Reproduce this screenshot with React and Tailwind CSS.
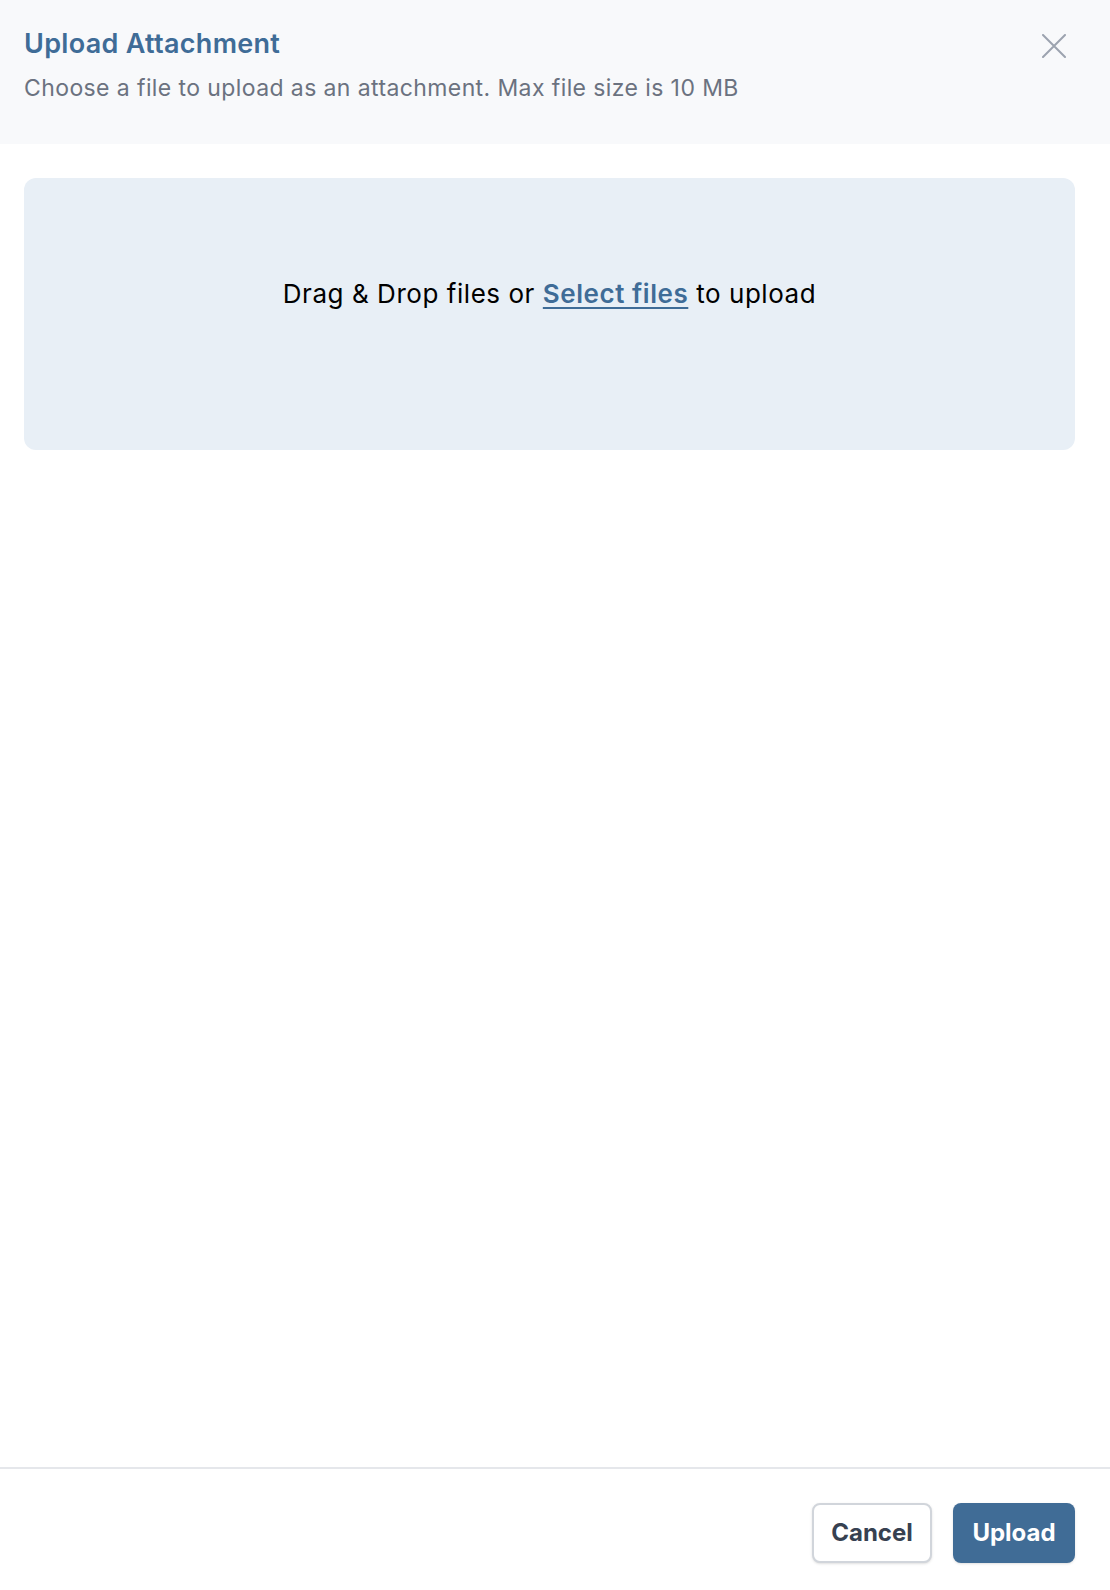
import React from 'react';

function CloseIcon() {
  return (
    <svg width="24" height="24" viewBox="0 0 24 24" fill="none" stroke="currentColor" strokeWidth="2" strokeLinecap="round">
      <path d="M1 1L23 23M23 1L1 23" />
    </svg>
  );
}

export default function App() {
  return (
    <div className="h-[1590px] flex flex-col bg-white font-['Inter',sans-serif]">
      {/* Header */}
      <div className="h-[144px] bg-[#f8f9fb] pl-6 pr-[35px] pt-[28px] flex justify-between">
        <div>
          <h2 className="text-[27px] leading-[32px] tracking-[0.3px] font-semibold text-[#3f6c97]">Upload Attachment</h2>
          <p className="mt-[12px] text-[23px] leading-[32px] tracking-[0.4px] text-[#6b7280]">
            Choose a file to upload as an attachment. Max file size is 10 MB
          </p>
        </div>
        <button className="text-[#9ca3af] mt-[6px] mr-[9px] h-6 w-6">
          <CloseIcon />
        </button>
      </div>

      {/* Body */}
      <div className="flex-1 pl-6 pr-[35px] pt-[34px]">
        <div className="h-[272px] rounded-xl bg-[#e8eff6] pt-[100px] text-center">
          <p className="text-[26px] leading-[32px] tracking-[0.55px] text-black">
            Drag &amp; Drop files or{' '}
            <a href="#" className="font-semibold text-[#3f6c97] underline decoration-2 underline-offset-4">Select files</a>{' '}
            to upload
          </p>
        </div>
      </div>

      {/* Footer */}
      <div className="border-t-2 border-[#e5e7eb] pl-6 pr-[35px] pt-[34px] pb-[27px] flex justify-end gap-[21px]">
        <button className="w-[120px] h-[60px] rounded-lg border-2 border-[#d1d5db] bg-white text-[24px] font-bold text-[#374151] shadow-sm">
          Cancel
        </button>
        <button className="w-[122px] h-[60px] rounded-lg bg-[#406c96] text-[24px] font-bold text-white shadow-sm">
          Upload
        </button>
      </div>
    </div>
  );
}
